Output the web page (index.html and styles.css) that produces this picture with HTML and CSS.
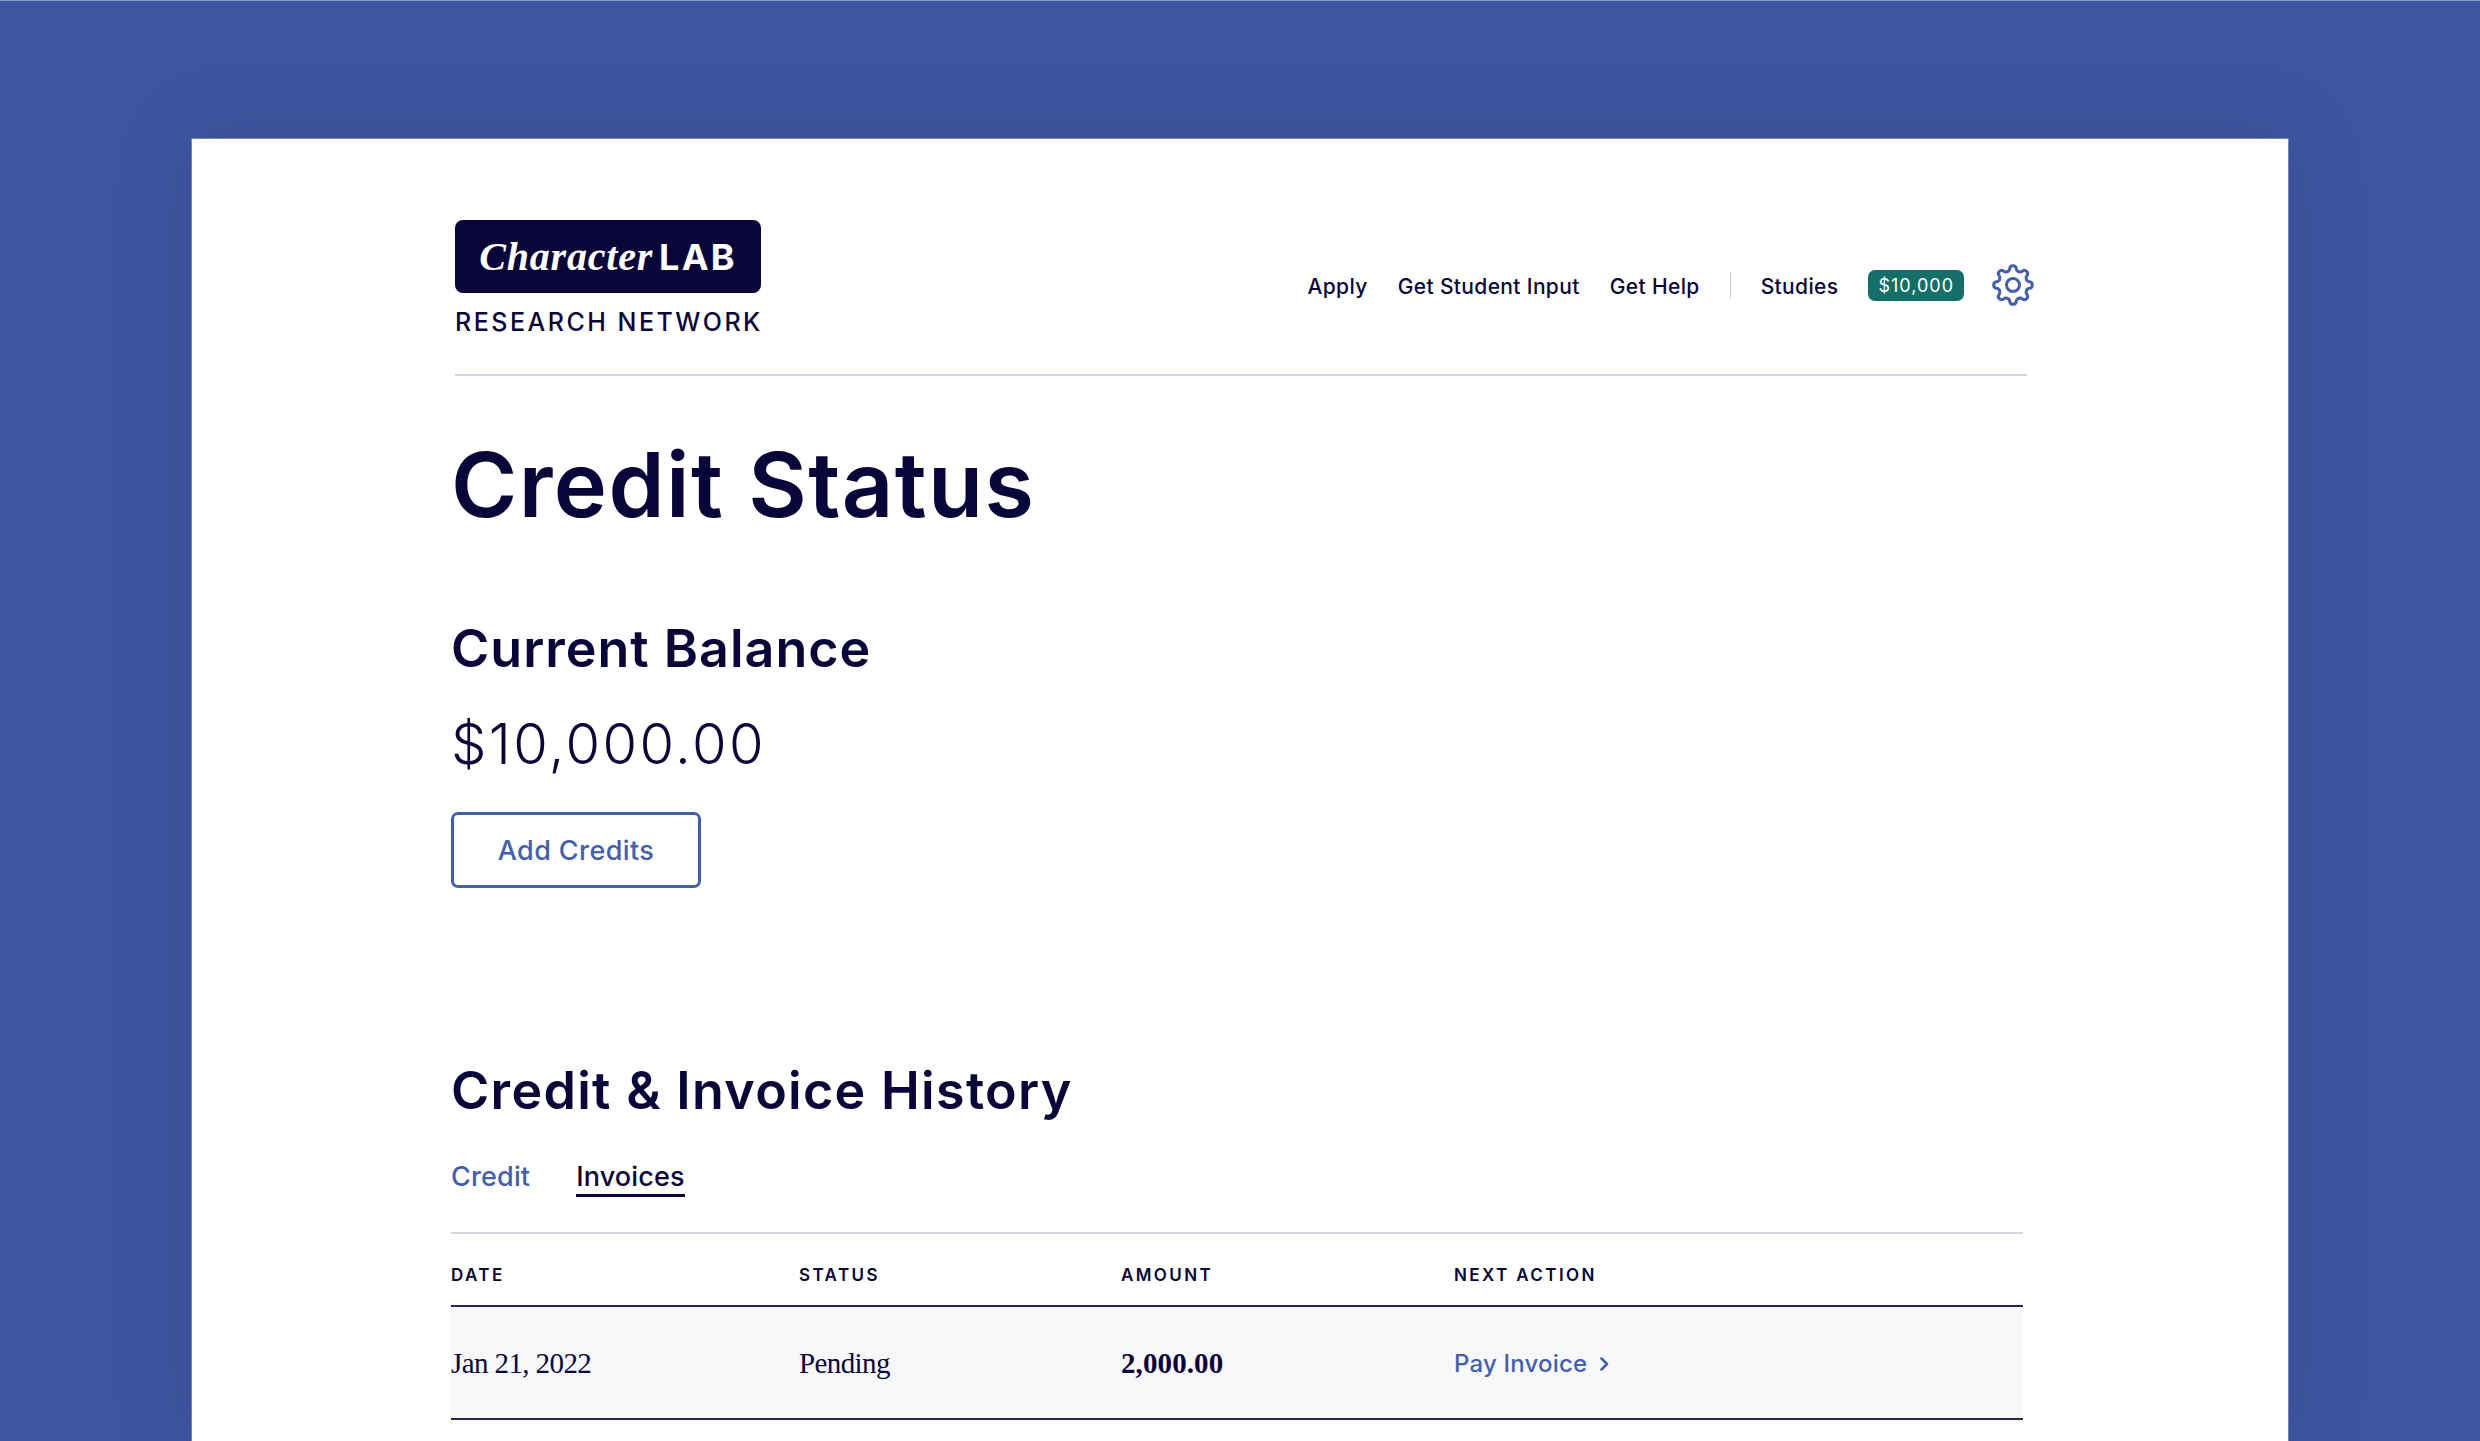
FILE: index.html
```html
<!doctype html>
<html>
  <head>
    <title>Credit Status</title>
    <meta charset="utf-8">
    <link rel="stylesheet" href="styles.css">
  </head>
  <body>
    <main class="card">
      <header class="top">
        <a class="logo">
          <span class="logo-box"><em>Character</em><b>LAB</b></span>
          <span class="logo-sub">RESEARCH NETWORK</span>
        </a>
        <nav class="nav">
          <a>Apply</a>
          <a>Get Student Input</a>
          <a>Get Help</a>
          <span class="nav-line"></span>
          <a>Studies</a>
          <span class="badge">$10,000</span>
          <svg class="gear" viewBox="0 0 42 42" fill="none" stroke="#4560ab" stroke-width="3" stroke-linecap="round">
            <defs><path id="tooth" d="M15.45 7.6C17.05 6.94 17.7 6 17.8 4.5 18 2.6 19.4 1.7 21 1.7S24 2.6 24.2 4.500C24.300 6 24.950 6.940 26.550 7.600"/></defs>
            <use href="#tooth"/>
            <use href="#tooth" transform="rotate(45 21 21)"/>
            <use href="#tooth" transform="rotate(90 21 21)"/>
            <use href="#tooth" transform="rotate(135 21 21)"/>
            <use href="#tooth" transform="rotate(180 21 21)"/>
            <use href="#tooth" transform="rotate(225 21 21)"/>
            <use href="#tooth" transform="rotate(270 21 21)"/>
            <use href="#tooth" transform="rotate(315 21 21)"/>
            <circle cx="21" cy="21" r="6.5"/>
          </svg>
        </nav>
      </header>

      <h1>Credit Status</h1>

      <h2>Current Balance</h2>
      <p class="amount">$10,000.00</p>
      <button class="btn" type="button">Add Credits</button>

      <h2 class="history">Credit &amp; Invoice History</h2>
      <div class="tabs">
        <a>Credit</a>
        <a class="active">Invoices</a>
      </div>

      <table>
        <thead>
          <tr>
            <th class="col-date">DATE</th>
            <th class="col-status">STATUS</th>
            <th class="col-amount">AMOUNT</th>
            <th>NEXT ACTION</th>
          </tr>
        </thead>
        <tbody>
          <tr>
            <td>Jan 21, 2022</td>
            <td>Pending</td>
            <td class="num">2,000.00</td>
            <td>
              <a class="pay">Pay Invoice
                <svg viewBox="0 0 10 16" fill="none" stroke="#4560ab" stroke-width="2.600" stroke-linecap="round" stroke-linejoin="round"><path d="M2.5 2.5 8 8l-5.500 5.500"/></svg>
              </a>
            </td>
          </tr>
        </tbody>
      </table>
    </main>
  </body>
</html>
```

FILE: styles.css
```css
html {
  overflow: hidden;
}
body {
  margin: 0;
  height: 1441px;
  box-sizing: border-box;
  padding: 138px 192px 0;
  display: flex;
  flex-direction: column;
  background: #3e56a0;
  border-top: 1px solid #8f9dcb;
  font-family: Inter, sans-serif;
  color: #0a0538;
}
.card {
  flex: 1;
  background: white;
  padding: 0 265px 0 259px;
  box-shadow: 0 0 0 1px #7385bd, 0 0 70px rgba(40, 50, 110, .22);
}
.top {
  display: flex;
  justify-content: space-between;
  align-items: flex-start;
  margin: 0 -4px 0 4px;
  padding-top: 81px;
  height: 154px;
  border-bottom: 2px solid #d6d6e0;
}
.logo {
  display: flex;
  flex-direction: column;
  width: 306px;
}
.logo-box {
  height: 73px;
  background: #0a0538;
  border-radius: 8px;
  color: white;
  display: flex;
  align-items: center;
  justify-content: center;
  gap: 6px;
}
.logo-box em {
  font-family: "Liberation Serif", serif;
  font-size: 40px;
  letter-spacing: .8px;
  font-weight: bold;
}
.logo-box b {
  font-size: 36px;
  font-weight: 700;
  letter-spacing: 2.2px;
}
.logo-sub {
  margin-top: 14px;
  font-size: 25px;
  font-weight: 500;
  letter-spacing: 2.5px;
  white-space: nowrap;
}
.nav {
  display: flex;
  align-items: center;
  margin: 44px -7px 0 0;
  gap: 30px;
  font-size: 21px;
  font-weight: 500;
  letter-spacing: .36px;
}
.nav a {
  padding-top: 2px;
}
.nav-line {
  width: 1px;
  height: 27px;
  background: #c9c9d4;
}
.badge {
  background: #156f69;
  color: white;
  border-radius: 7px;
  padding: 0 10px;
  height: 31px;
  line-height: 31px;
  font-size: 18px;
  font-weight: 400;
  letter-spacing: 1px;
}
.gear {
  width: 42px;
  height: 42px;
  margin-left: -2px;
}
h1 {
  margin: 54px 0 0;
  font-size: 90px;
  line-height: 110px;
  font-weight: 600;
  letter-spacing: 1.4px;
}
h2 {
  margin: 77px 0 0;
  font-size: 52px;
  line-height: 64px;
  font-weight: 600;
  letter-spacing: 1px;
}
.amount {
  margin: 31px 0 0;
  font-size: 56px;
  line-height: 64px;
  font-weight: 300;
  letter-spacing: 2.4px;
}
.btn {
  display: block;
  margin-top: 36px;
  width: 250px;
  height: 76px;
  background: white;
  border: 3px solid #4560ab;
  border-radius: 7px;
  color: #4560ab;
  font: 500 27px Inter, sans-serif;
  letter-spacing: .4px;
}
.history {
  margin-top: 171px;
  letter-spacing: 1.3px;
}
.tabs {
  display: flex;
  gap: 46px;
  margin-top: 36px;
  font-size: 27px;
  font-weight: 500;
  letter-spacing: .15px;
  color: #4560ab;
}
.tabs a {
  height: 35px;
  line-height: 36px;
}
.tabs .active {
  color: #0a0538;
  border-bottom: 3px solid #0a0538;
}
table {
  width: 100%;
  margin-top: 35px;
  border-collapse: collapse;
  table-layout: fixed;
}
th {
  height: 61px;
  padding: 10px 0 0;
  text-align: left;
  border-top: 2px solid #d6d6e0;
  border-bottom: 2px solid #2a2556;
  font-size: 17px;
  font-weight: 600;
  letter-spacing: 2.4px;
}
.col-date {
  width: 348px;
}
.col-status {
  width: 322px;
}
.col-amount {
  width: 333px;
}
td {
  height: 109px;
  padding: 2px 0 0;
  background: #f8f8fb;
  border-bottom: 2px solid #2a2556;
  font-family: "Liberation Serif", serif;
  font-size: 29px;
  letter-spacing: -.6px;
}
.num {
  font-weight: bold;
  letter-spacing: .1px;
}
.pay {
  display: flex;
  align-items: center;
  gap: 12px;
  font-family: Inter, sans-serif;
  font-size: 24px;
  font-weight: 500;
  letter-spacing: .2px;
  color: #4560ab;
}
.pay svg {
  width: 10px;
  height: 16px;
}
```
